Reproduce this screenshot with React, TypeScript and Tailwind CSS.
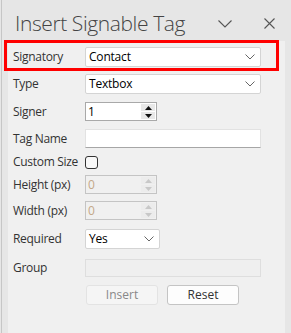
import React from 'react';

const font = { fontFamily: '"Open Sans", "Noto Sans", "Liberation Sans", sans-serif' };

function Chevron({ className = '' }: { className?: string }) {
  return (
    <svg width="10" height="6" viewBox="0 0 10 6" className={className}>
      <path d="M0.5 0.5 L5 5 L9.5 0.5" fill="none" stroke="#666" strokeWidth="1" />
    </svg>
  );
}

function Select({ value, width }: { value: string; width: string }) {
  return (
    <div className={`${width} h-[20px] bg-white border border-[#d4d4d4] rounded-[2px] flex items-center justify-between pl-[3px] pr-[5px] text-[12px] tracking-[-0.2px] text-black`}>
      <span>{value}</span>
      <Chevron />
    </div>
  );
}

function Spin({ value, disabled }: { value: string; disabled?: boolean }) {
  return (
    <div
      className={`w-[72px] h-[19px] flex border ${
        disabled ? 'border-[#c4c4c4] bg-[#f0f0f0]' : 'border-[#a9a9a9] bg-white'
      }`}
    >
      <div className={`flex-1 pl-[2px] text-[12px] leading-[17px] ${disabled ? 'text-[#c4a888]' : 'text-black'}`}>
        {value}
      </div>
      <div className="w-[15px] flex flex-col gap-px py-px pr-px">
        <div className={`flex-1 flex items-center justify-center ${disabled ? 'bg-[#ececec]' : 'bg-[#e8e8e8]'}`}>
          <svg width="7" height="4" viewBox="0 0 7 4">
            <path d="M0 4 L3.5 0 L7 4 Z" fill={disabled ? '#c8c8c8' : '#111'} />
          </svg>
        </div>
        <div className={`flex-1 flex items-center justify-center ${disabled ? 'bg-[#ececec]' : 'bg-[#e8e8e8]'}`}>
          <svg width="7" height="4" viewBox="0 0 7 4">
            <path d="M0 0 L7 0 L3.5 4 Z" fill={disabled ? '#c8c8c8' : '#111'} />
          </svg>
        </div>
      </div>
    </div>
  );
}

function Row({ label, children, h, mt }: { label: string; children: React.ReactNode; h: string; mt: string }) {
  return (
    <div className={`flex items-center ${h} ${mt}`}>
      <div className="w-[72px] text-[12px] tracking-[-0.3px] text-[#333]">{label}</div>
      {children}
    </div>
  );
}

export default function App() {
  return (
    <div className="w-[291px] h-[333px] bg-[#e6e6e6] overflow-hidden relative pl-px" style={font}>
      <div className="h-full border-l-[1.5px] border-[#c6c6c6] flex flex-col">
        {/* header */}
        <div className="h-[41px] flex items-start pl-[13px] pr-[14px]">
          <div className="text-[21px] font-light text-[#444] leading-none pt-[13px] tracking-[-0.4px]">
            Insert Signable Tag
          </div>
          <div className="ml-auto flex items-center gap-[32px] pt-[18px] pr-[2px]">
            <svg width="14" height="8" viewBox="0 0 14 8">
              <path d="M0.5 0.5 L7 7 L13.5 0.5" fill="none" stroke="#555" strokeWidth="1.1" />
            </svg>
            <svg width="11" height="11" viewBox="0 0 11 11">
              <path d="M0.5 0.5 L10.5 10.5 M10.5 0.5 L0.5 10.5" fill="none" stroke="#555" strokeWidth="1.1" />
            </svg>
          </div>
        </div>

        {/* panel */}
        <div className="flex-1 ml-[6px] mr-[6px] bg-[#f0f0f0] pl-[5px] pt-[6px]">
          <Row label="Signatory" h="h-[20px]" mt="mt-0">
            <Select value="Contact" width="w-[176px]" />
          </Row>
          <Row label="Type" h="h-[20px]" mt="mt-[7px]">
            <Select value="Textbox" width="w-[176px]" />
          </Row>
          <Row label="Signer" h="h-[19px]" mt="mt-[8px]">
            <Spin value="1" />
          </Row>
          <Row label="Tag Name" h="h-[19px]" mt="mt-[8px]">
            <div className="w-[176px] h-[19px] bg-white border border-[#e2e2e2] border-b-[#a6a6a6]" />
          </Row>
          <Row label="Custom Size" h="h-[20px]" mt="mt-[4px]">
            <div className="w-[13px] h-[13px] border border-[#333] rounded-[3px] bg-[#f8f8f8]" />
          </Row>
          <Row label="Height (px)" h="h-[19px]" mt="mt-[3px]">
            <Spin value="0" disabled />
          </Row>
          <Row label="Width (px)" h="h-[19px]" mt="mt-[7px]">
            <Spin value="0" disabled />
          </Row>
          <Row label="Required" h="h-[20px]" mt="mt-[9px]">
            <Select value="Yes" width="w-[75px]" />
          </Row>
          <Row label="Group" h="h-[18px]" mt="mt-[10px]">
            <div className="w-[176px] h-[18px] bg-[#efefef] border border-[#dedede]" />
          </Row>
          <div className="flex gap-[9px] mt-[8px] pl-[73px]">
            <div className="w-[72px] h-[20px] rounded-[3px] bg-[#f5f5f5] border border-[#e3e3e3] text-[12px] text-[#888] flex items-center justify-center">
              Insert
            </div>
            <div className="w-[72px] h-[20px] rounded-[3px] bg-[#fdfdfd] border border-[#c4c4c4] text-[12px] text-[#333] flex items-center justify-center">
              Reset
            </div>
          </div>
        </div>
      </div>

      {/* highlight annotation */}
      <div className="absolute left-[4px] top-[40px] w-[275px] h-[31px] border-[3px] border-[#ff0000]" />
    </div>
  );
}
